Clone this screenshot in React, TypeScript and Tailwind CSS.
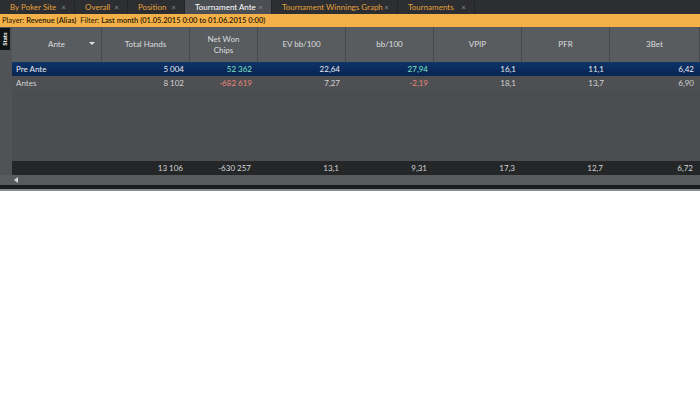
import React from "react";

const font = { fontFamily: 'Lato, "Noto Sans", sans-serif' };

const tabs = [
  { label: "By Poker Site", w: "w-[75px]" },
  { label: "Overall", w: "w-[53px]" },
  { label: "Position", w: "w-[57px]" },
  { label: "Tournament Ante", w: "w-[87px]", active: true },
  { label: "Tournament Winnings Graph", w: "w-[126px]" },
  { label: "Tournaments", w: "w-[77px]" },
];

const cols = [
  { label: "Ante", w: "w-[90px]" },
  { label: "Total Hands", w: "w-[88px]" },
  { label: "Net Won\nChips", w: "w-[68px]" },
  { label: "EV bb/100", w: "w-[88px]" },
  { label: "bb/100", w: "w-[88px]" },
  { label: "VPIP", w: "w-[88px]" },
  { label: "PFR", w: "w-[88px]" },
  { label: "3Bet", w: "w-[90px]" },
];

type Cell = { v: string; c?: "pos" | "neg" };

const rows: { cells: Cell[]; selected?: boolean }[] = [
  {
    selected: true,
    cells: [
      { v: "Pre Ante" },
      { v: "5 004" },
      { v: "52 362", c: "pos" },
      { v: "22,64" },
      { v: "27,94", c: "pos" },
      { v: "16,1" },
      { v: "11,1" },
      { v: "6,42" },
    ],
  },
  {
    cells: [
      { v: "Antes" },
      { v: "8 102" },
      { v: "-682 619", c: "neg" },
      { v: "7,27" },
      { v: "-2,19", c: "neg" },
      { v: "18,1" },
      { v: "13,7" },
      { v: "6,90" },
    ],
  },
];

const totals = ["", "13 106", "-630 257", "13,1", "9,31", "17,3", "12,7", "6,72"];

export default function App() {
  return (
    <div className="w-[700px] h-[394px] bg-white text-[8px] leading-none" style={font}>
      {/* Tab strip */}
      <div className="flex h-[14px] bg-[#2c2e31]">
        {tabs.map((t) => (
          <div
            key={t.label}
            className={
              "flex shrink-0 items-center justify-between whitespace-nowrap pl-[10px] pr-[8px] border-r border-[#222426] " +
              t.w +
              (t.active ? " bg-[#4b4e52] text-white" : " text-[#e5a13c]")
            }
          >
            <span>{t.label}</span>
            <span className="text-[#8a8c8f] text-[8px]">×</span>
          </div>
        ))}
      </div>

      {/* Filter bar */}
      <div className="flex h-[13px] items-center whitespace-nowrap bg-[#f4b049] pl-[2px] text-[7.5px] text-[#241804]">
        <span>Player:&nbsp;</span>
        <span className="font-semibold">Revenue (Alias)</span>
        <span>&nbsp;&nbsp;Filter:&nbsp;</span>
        <span className="font-semibold">Last month (01.05.2015 0:00 to 01.06.2015 0:00)</span>
      </div>

      {/* Grid */}
      <div className="flex bg-[#4b4d50]">
        {/* Left side strip */}
        <div className="w-[12px] shrink-0 bg-[#505255] pt-[1px]">
          <div className="flex h-[22px] w-[10px] items-center justify-center bg-[#111213]">
            <span className="rotate-[-90deg] text-[6px] font-bold text-white">Stats</span>
          </div>
        </div>

        <div className="flex flex-1 flex-col">
          {/* Header */}
          <div className="flex h-[35px] bg-[#595c5f]">
            {cols.map((c, i) => (
              <div
                key={c.label}
                className={
                  "relative flex items-center justify-center whitespace-pre-line text-center leading-[11px] text-[#dcdddf] border-r border-[#46484b] " +
                  c.w
                }
              >
                {c.label}
                {i === 0 && (
                  <span className="absolute right-[6px] top-[15px] h-0 w-0 border-x-[3px] border-t-[3px] border-x-transparent border-t-[#e0e0e0]" />
                )}
              </div>
            ))}
          </div>

          {/* Rows */}
          {rows.map((r, ri) => (
            <div
              key={ri}
              className={
                "flex h-[14px] items-center " +
                (r.selected
                  ? "bg-gradient-to-b from-[#0f3468] to-[#082452] text-[#e8eaee]"
                  : "bg-[#4d4f52] text-[#d2d3d5]")
              }
            >
              {r.cells.map((cell, ci) => (
                <div
                  key={ci}
                  className={
                    cols[ci].w +
                    (ci === 0 ? " pl-[4px] text-left" : " pr-[6px] text-right") +
                    (cell.c === "pos" ? " text-[#7fe3c6]" : "") +
                    (cell.c === "neg" ? " text-[#e8887a]" : "")
                  }
                >
                  {cell.v}
                </div>
              ))}
            </div>
          ))}

          {/* Empty body */}
          <div className="h-[71px] bg-[#4b4d50]" />
        </div>
      </div>

      {/* Totals */}
      <div className="flex h-[14px] items-center bg-[#505255]">
        <div className="w-[12px] h-full" />
        <div className="flex h-full flex-1 items-center bg-[#242628] text-[#d4d5d7]">
          {totals.map((t, i) => (
            <div key={i} className={cols[i].w + " pr-[7px] text-right"}>
              {t}
            </div>
          ))}
        </div>
      </div>

      {/* Scrollbar */}
      <div className="flex h-[10px] items-center bg-[#585b5e] pl-[14px]">
        <span className="h-0 w-0 border-y-[3px] border-r-[4px] border-y-transparent border-r-[#d8d8d8]" />
      </div>
      <div className="h-[4px] bg-[#1b1c1e]" />
      <div className="h-[2px] bg-[#8b8d90]" />
    </div>
  );
}
